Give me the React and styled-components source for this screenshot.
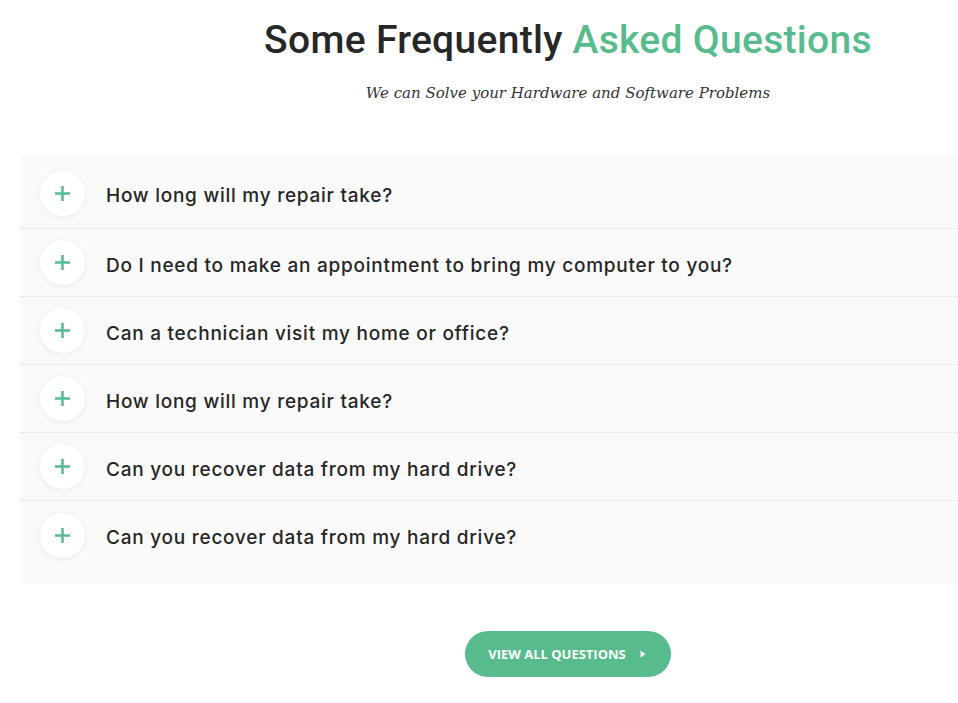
import React from "react";
import styled, { createGlobalStyle } from "styled-components";

const Global = createGlobalStyle`
  html, body { margin: 0; padding: 0; background: #fff; overflow-x: hidden; }
  * { box-sizing: border-box; }
`;

const GREEN = "#57bb8e";

const Page = styled.div`
  width: 1096px;
  margin-left: 20px;
  padding-top: 17px;
  padding-bottom: 26px;
`;

const Title = styled.h2`
  margin: 0;
  text-align: center;
  font-family: Roboto, "Liberation Sans", sans-serif;
  font-weight: 500;
  font-size: 39px;
  line-height: 46px;
  color: #272727;
  letter-spacing: 0.3px;
`;

const Accent = styled.span`
  color: ${GREEN};
`;

const Subtitle = styled.p`
  margin: 20px 0 0;
  text-align: center;
  font-family: "DejaVu Serif", "Liberation Serif", serif;
  font-style: italic;
  font-size: 15px;
  line-height: 20px;
  color: #333;
`;

const Panel = styled.div`
  margin-top: 52px;
  background: #fafafa;
  padding: 0 0 15px;
`;

const Row = styled.div`
  display: flex;
  align-items: center;
  gap: 21px;
  height: 68px;
  padding-left: 20px;
  border-bottom: 1px dotted #dedede;
  &:last-child { border-bottom: none; }
`;

const FirstRow = styled(Row)`
  height: 74px;
  padding-top: 3px;
`;

const Circle = styled.span`
  width: 45px;
  height: 45px;
  border-radius: 50%;
  background: #fff;
  box-shadow: 0 1px 6px rgba(0, 0, 0, 0.07);
  display: flex;
  align-items: center;
  justify-content: center;
  flex: none;
`;

const Question = styled.span`
  padding-top: 5px;
  font-family: Inter, "Open Sans", "Liberation Sans", sans-serif;
  font-weight: 500;
  font-size: 19px;
  color: #262626;
  letter-spacing: 0.75px;
`;

const ButtonWrap = styled.div`
  display: flex;
  justify-content: center;
  margin-top: 47px;
`;

const Button = styled.a`
  display: inline-flex;
  align-items: center;
  gap: 14px;
  height: 46px;
  padding: 0 25px 0 23px;
  border-radius: 23px;
  background: ${GREEN};
  color: #fff;
  font-family: "Open Sans", "Liberation Sans", sans-serif;
  font-weight: 700;
  font-size: 13px;
  text-transform: uppercase;
  text-decoration: none;
  cursor: pointer;
`;

const Plus = () => (
  <svg width="17" height="17" viewBox="0 0 17 17">
    <path d="M8.5 1v15M1 8.5h15" stroke={GREEN} strokeWidth="2.5" />
  </svg>
);

const Arrow = () => (
  <svg width="6" height="8" viewBox="0 0 6 8">
    <path d="M0.5 0.5L5.5 4L0.5 7.5Z" fill="#fff" />
  </svg>
);

const questions = [
  "How long will my repair take?",
  "Do I need to make an appointment to bring my computer to you?",
  "Can a technician visit my home or office?",
  "How long will my repair take?",
  "Can you recover data from my hard drive?",
  "Can you recover data from my hard drive?",
];

export default function App() {
  return (
    <>
      <Global />
      <Page>
        <Title>
          Some Frequently <Accent>Asked Questions</Accent>
        </Title>
        <Subtitle>We can Solve your Hardware and Software Problems</Subtitle>
        <Panel>
          {questions.map((q, i) => {
            const R = i === 0 ? FirstRow : Row;
            return (
              <R key={i}>
                <Circle>
                  <Plus />
                </Circle>
                <Question>{q}</Question>
              </R>
            );
          })}
        </Panel>
        <ButtonWrap>
          <Button>
            View all questions
            <Arrow />
          </Button>
        </ButtonWrap>
      </Page>
    </>
  );
}
